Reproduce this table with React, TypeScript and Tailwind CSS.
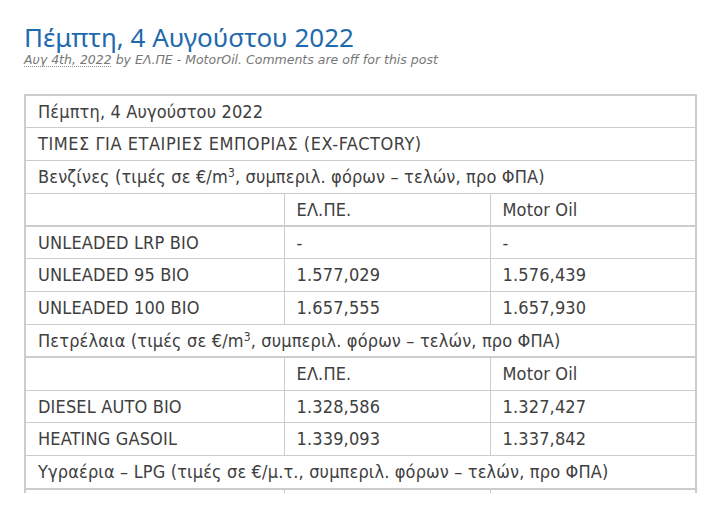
import React from "react";

const cell = "border border-[#cccccc] px-[12px] h-[32.8px] align-middle whitespace-nowrap";

function Row({ a, b, c, thick }: { a: string; b: string; c: string; thick?: boolean }) {
  return (
    <tr className={thick ? "border-b-2 border-[#cccccc]" : ""}>
      <td className={cell}>{a}</td>
      <td className={cell}>{b}</td>
      <td className={cell}>{c}</td>
    </tr>
  );
}

function Span({ children, thick, wide }: { children: React.ReactNode; thick?: boolean; wide?: boolean }) {
  return (
    <tr className={thick ? "border-b-2 border-[#cccccc]" : ""}>
      <td colSpan={3} className={cell + (wide ? " tracking-[0.55px]" : "")}>
        {children}
      </td>
    </tr>
  );
}

export default function App() {
  return (
    <div className="w-[714px] h-[517px] bg-white overflow-hidden">
      <div className="h-[493px] overflow-hidden pl-[24px] pt-[24px]">
        <h1
          className="text-[26px] leading-[26px] text-[#1f6aae] font-normal"
          style={{ fontFamily: '"Noto Sans", "Open Sans", sans-serif' }}
        >
          Πέμπτη, 4 Αυγούστου 2022
        </h1>
        <div
          className="text-[12.5px] leading-[14px] italic text-[#777777] mt-[3px]"
          style={{ fontFamily: '"DejaVu Sans", Verdana, sans-serif' }}
        >
          <span className="underline decoration-dotted decoration-[#999999] underline-offset-2">Αυγ 4th, 2022</span>{" "}
          by ΕΛ.ΠΕ - MotorOil. Comments are off for this post
        </div>
        <table
          className="mt-[27px] w-[673px] border-collapse border-2 border-[#cccccc] text-[18px] leading-[22px] tracking-[0.15px] text-[#404040] table-fixed"
          style={{ fontFamily: '"DejaVu Sans Condensed", "DejaVu Sans", sans-serif' }}
        >
          <colgroup>
            <col className="w-[259px]" />
            <col className="w-[206px]" />
            <col />
          </colgroup>
          <tbody>
            <Span>Πέμπτη, 4 Αυγούστου 2022</Span>
            <Span wide>ΤΙΜΕΣ ΓΙΑ ΕΤΑΙΡΙΕΣ ΕΜΠΟΡΙΑΣ (EX-FACTORY)</Span>
            <Span>
              Βενζίνες (τιμές σε €/m<sup className="text-[12px]">3</sup>, συμπεριλ. φόρων – τελών, προ ΦΠΑ)
            </Span>
            <Row a="" b="ΕΛ.ΠΕ." c="Motor Oil" thick />
            <Row a="UNLEADED LRP BIO" b="-" c="-" />
            <Row a="UNLEADED 95 BIO" b="1.577,029" c="1.576,439" />
            <Row a="UNLEADED 100 BIO" b="1.657,555" c="1.657,930" />
            <Span thick>
              Πετρέλαια (τιμές σε €/m<sup className="text-[12px]">3</sup>, συμπεριλ. φόρων – τελών, προ ΦΠΑ)
            </Span>
            <Row a="" b="ΕΛ.ΠΕ." c="Motor Oil" />
            <Row a="DIESEL AUTO BIO" b="1.328,586" c="1.327,427" />
            <Row a="HEATING GASOIL" b="1.339,093" c="1.337,842" />
            <Span thick>Υγραέρια – LPG (τιμές σε €/μ.τ., συμπεριλ. φόρων – τελών, προ ΦΠΑ)</Span>
            <Row a="" b="" c="" />
          </tbody>
        </table>
      </div>
    </div>
  );
}
